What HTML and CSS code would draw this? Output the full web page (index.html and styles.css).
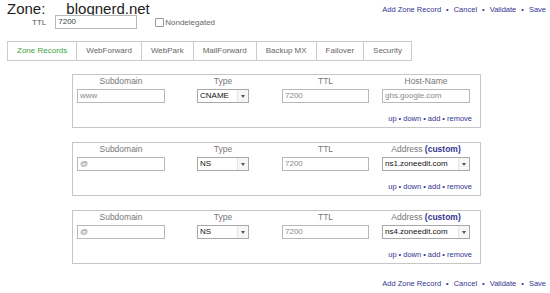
FILE: index.html
```html
<!DOCTYPE html>
<html>
<head>
<meta charset="utf-8">
<link rel="stylesheet" href="styles.css">
</head>
<body>
<div class="page">
  <div class="head">
    <h1 class="title"><span class="title-label">Zone:</span>blognerd.net</h1>
    <div class="actions"><a>Add Zone Record</a><span class="dot">•</span><a>Cancel</a><span class="dot">•</span><a>Validate</a><span class="dot">•</span><a>Save</a></div>
  </div>
  <div class="ttl-row">
    <span class="ttl-label">TTL</span>
    <div class="text-input ttl-input">7200</div>
    <span class="checkbox"></span>
    <span class="check-label">Nondelegated</span>
  </div>
  <div class="tabs">
    <div class="tab active">Zone Records</div>
    <div class="tab">WebForward</div>
    <div class="tab">WebPark</div>
    <div class="tab">MailForward</div>
    <div class="tab">Backup MX</div>
    <div class="tab">Failover</div>
    <div class="tab">Security</div>
  </div>
  <div class="records">
    <div class="card">
      <div class="fields">
        <div class="field f-sub"><span class="label">Subdomain</span><div class="text-input">www</div></div>
        <div class="field f-type"><span class="label">Type</span><div class="select"><span class="sel-text">CNAME</span><span class="sel-arrow"></span></div></div>
        <div class="field f-ttl"><span class="label">TTL</span><div class="text-input">7200</div></div>
        <div class="field f-host"><span class="label">Host-Name</span><div class="text-input">ghs.google.com</div></div>
      </div>
      <div class="row-links"><a>up</a><span class="dot">•</span><a>down</a><span class="dot">•</span><a>add</a><span class="dot">•</span><a>remove</a></div>
    </div>
    <div class="card">
      <div class="fields">
        <div class="field f-sub"><span class="label">Subdomain</span><div class="text-input">@</div></div>
        <div class="field f-type"><span class="label">Type</span><div class="select"><span class="sel-text">NS</span><span class="sel-arrow"></span></div></div>
        <div class="field f-ttl"><span class="label">TTL</span><div class="text-input">7200</div></div>
        <div class="field f-host"><span class="label">Address <a class="custom">(custom)</a></span><div class="select"><span class="sel-text">ns1.zoneedit.com</span><span class="sel-arrow"></span></div></div>
      </div>
      <div class="row-links"><a>up</a><span class="dot">•</span><a>down</a><span class="dot">•</span><a>add</a><span class="dot">•</span><a>remove</a></div>
    </div>
    <div class="card">
      <div class="fields">
        <div class="field f-sub"><span class="label">Subdomain</span><div class="text-input">@</div></div>
        <div class="field f-type"><span class="label">Type</span><div class="select"><span class="sel-text">NS</span><span class="sel-arrow"></span></div></div>
        <div class="field f-ttl"><span class="label">TTL</span><div class="text-input">7200</div></div>
        <div class="field f-host"><span class="label">Address <a class="custom">(custom)</a></span><div class="select"><span class="sel-text">ns4.zoneedit.com</span><span class="sel-arrow"></span></div></div>
      </div>
      <div class="row-links"><a>up</a><span class="dot">•</span><a>down</a><span class="dot">•</span><a>add</a><span class="dot">•</span><a>remove</a></div>
    </div>
  </div>
  <div class="actions bottom"><a>Add Zone Record</a><span class="dot">•</span><a>Cancel</a><span class="dot">•</span><a>Validate</a><span class="dot">•</span><a>Save</a></div>
</div>
</body>
</html>
```
FILE: styles.css
```css
* { box-sizing: border-box; }
body {
  margin: 0;
  background: #fff;
  font-family: "Liberation Sans", Arial, sans-serif;
  color: #555;
}
.page {
  width: 550px;
  padding: 1px 4px 0 7px;
}
.head {
  display: flex;
  justify-content: space-between;
  align-items: flex-start;
}
.title {
  margin: 0;
  font-size: 15px;
  font-weight: normal;
  line-height: 16px;
  color: #222;
}
.title-label { margin-right: 21px; }
.actions {
  font-size: 7.5px;
  line-height: 10px;
  margin-top: 4px;
  display: flex;
  justify-content: flex-end;
}
a { color: #35358f; text-decoration: none; }
.dot { color: #35358f; margin: 0 5px; }
.ttl-row {
  display: flex;
  align-items: center;
  margin-left: 25px;
  margin-top: -2px;
  font-size: 8px;
}
.ttl-label { color: #555; margin-right: 9px; }
.text-input {
  height: 14px;
  border: 1px solid #b8b8b8;
  background: #fff;
  font-size: 8px;
  line-height: 12px;
  padding-left: 2px;
  color: #888;
  white-space: nowrap;
  overflow: hidden;
}
.ttl-input { width: 82px; color: #444; }
.checkbox {
  width: 9px;
  height: 9px;
  border: 1px solid #999;
  border-radius: 1px;
  margin-left: 18px;
  margin-right: 1px;
}
.check-label { color: #666; }
.tabs {
  display: inline-flex;
  margin-top: 12px;
  border: 1px solid #ccc;
  height: 20px;
}
.tab {
  font-size: 8px;
  line-height: 18px;
  padding: 0 9px;
  color: #666;
  border-left: 1px solid #ccc;
}
.tab:first-child { border-left: 0; }
.tab.active { color: #3aa63a; }
.records {
  margin-left: 65px;
  width: 409px;
  margin-top: 13px;
  display: flex;
  flex-direction: column;
  gap: 14px;
}
.card {
  height: 54px;
  border: 1px solid #c6c6c6;
  padding: 1px 8px 0 4px;
}
.fields { display: flex; }
.field {
  display: flex;
  flex-direction: column;
  align-items: center;
}
.label {
  font-size: 8.5px;
  line-height: 10px;
  color: #777;
  white-space: nowrap;
  margin-bottom: 3px;
}
.custom { font-weight: bold; }
.field .text-input, .field .select { width: 100%; }
.f-sub { width: 88px; }
.f-type { width: 52px; margin-left: 32px; }
.f-ttl { width: 87px; margin-left: 33px; }
.f-host { width: 88px; margin-left: 13px; }
.select {
  height: 14px;
  border: 1px solid #a8a8a8;
  background: #fff;
  display: flex;
  font-size: 8px;
  line-height: 12px;
  color: #111;
}
.sel-text { flex: 1; padding-left: 2px; white-space: nowrap; overflow: hidden; }
.sel-arrow {
  width: 11px;
  border-left: 1px solid #e6e6e6;
  background: #f6f6f6;
  display: flex;
  align-items: center;
  justify-content: center;
}
.sel-arrow::after {
  content: "";
  border-left: 2px solid transparent;
  border-right: 2px solid transparent;
  border-top: 3px solid #555;
}
.row-links {
  display: flex;
  justify-content: flex-end;
  font-size: 7.5px;
  line-height: 10px;
  margin-top: 11px;
}
.row-links .dot { margin: 0 2px; }
.actions.bottom { margin-top: 15px; }
```
